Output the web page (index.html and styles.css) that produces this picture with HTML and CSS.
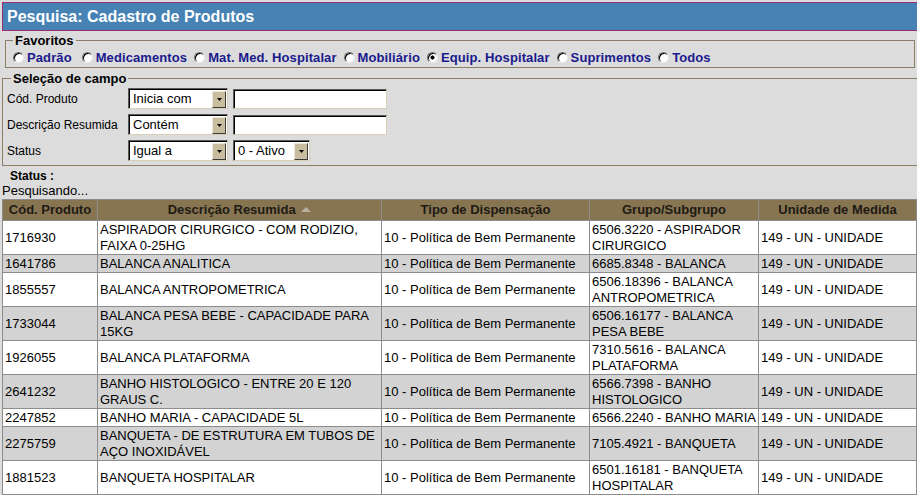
FILE: index.html
```html
<!DOCTYPE html>
<html lang="pt-BR">
<head>
<meta charset="utf-8">
<title>Pesquisa: Cadastro de Produtos</title>
<link rel="stylesheet" href="styles.css">
</head>
<body>
<div class="titlebar">Pesquisa: Cadastro de Produtos</div>

<fieldset class="box fav">
  <legend>Favoritos</legend>
  <div class="radios">
    <label class="opt first"><span class="radio"></span>Padrão</label>
    <label class="opt"><span class="radio"></span>Medicamentos</label>
    <label class="opt"><span class="radio"></span>Mat. Med. Hospitalar</label>
    <label class="opt"><span class="radio"></span>Mobiliário</label>
    <label class="opt"><span class="radio checked"></span>Equip. Hospitalar</label>
    <label class="opt"><span class="radio"></span>Suprimentos</label>
    <label class="opt"><span class="radio"></span>Todos</label>
  </div>
</fieldset>

<fieldset class="box sel">
  <legend>Seleção de campo</legend>
  <div class="fields">
    <span class="lbl">Cód. Produto</span>
    <div class="select w100"><span class="val">Inicia com</span><span class="btn"><svg width="5" height="3" viewBox="0 0 5 3"><path d="M0 0H5L2.5 3Z" fill="#000"/></svg></span></div>
    <div class="input"></div>

    <span class="lbl">Descrição Resumida</span>
    <div class="select w100"><span class="val">Contém</span><span class="btn"><svg width="5" height="3" viewBox="0 0 5 3"><path d="M0 0H5L2.5 3Z" fill="#000"/></svg></span></div>
    <div class="input"></div>

    <span class="lbl">Status</span>
    <div class="select w100"><span class="val">Igual a</span><span class="btn"><svg width="5" height="3" viewBox="0 0 5 3"><path d="M0 0H5L2.5 3Z" fill="#000"/></svg></span></div>
    <div class="select w77 second"><span class="val">0 - Ativo</span><span class="btn"><svg width="5" height="3" viewBox="0 0 5 3"><path d="M0 0H5L2.5 3Z" fill="#000"/></svg></span></div>
  </div>
</fieldset>

<div class="status">Status :</div>
<div class="msg">Pesquisando...</div>

<table class="results">
  <colgroup>
    <col class="c1"><col class="c2"><col class="c3"><col class="c4"><col class="c5">
  </colgroup>
  <thead>
    <tr>
      <th>Cód. Produto</th>
      <th>Descrição Resumida <span class="sort"></span></th>
      <th>Tipo de Dispensação</th>
      <th>Grupo/Subgrupo</th>
      <th>Unidade de Medida</th>
    </tr>
  </thead>
  <tbody>
    <tr class="w">
      <td>1716930</td><td>ASPIRADOR CIRURGICO - COM RODIZIO, FAIXA 0-25HG</td><td>10 - Política de Bem Permanente</td><td>6506.3220 - ASPIRADOR CIRURGICO</td><td>149 - UN - UNIDADE</td>
    </tr>
    <tr class="g">
      <td>1641786</td><td>BALANCA ANALITICA</td><td>10 - Política de Bem Permanente</td><td>6685.8348 - BALANCA</td><td>149 - UN - UNIDADE</td>
    </tr>
    <tr class="w">
      <td>1855557</td><td>BALANCA ANTROPOMETRICA</td><td>10 - Política de Bem Permanente</td><td>6506.18396 - BALANCA ANTROPOMETRICA</td><td>149 - UN - UNIDADE</td>
    </tr>
    <tr class="g">
      <td>1733044</td><td>BALANCA PESA BEBE - CAPACIDADE PARA 15KG</td><td>10 - Política de Bem Permanente</td><td>6506.16177 - BALANCA PESA BEBE</td><td>149 - UN - UNIDADE</td>
    </tr>
    <tr class="w">
      <td>1926055</td><td>BALANCA PLATAFORMA</td><td>10 - Política de Bem Permanente</td><td>7310.5616 - BALANCA PLATAFORMA</td><td>149 - UN - UNIDADE</td>
    </tr>
    <tr class="g">
      <td>2641232</td><td>BANHO HISTOLOGICO - ENTRE 20 E 120 GRAUS C.</td><td>10 - Política de Bem Permanente</td><td>6566.7398 - BANHO HISTOLOGICO</td><td>149 - UN - UNIDADE</td>
    </tr>
    <tr class="w">
      <td>2247852</td><td>BANHO MARIA - CAPACIDADE 5L</td><td>10 - Política de Bem Permanente</td><td class="nw">6566.2240 - BANHO MARIA</td><td>149 - UN - UNIDADE</td>
    </tr>
    <tr class="g">
      <td>2275759</td><td>BANQUETA - DE ESTRUTURA EM TUBOS DE AÇO INOXIDÁVEL</td><td>10 - Política de Bem Permanente</td><td>7105.4921 - BANQUETA</td><td>149 - UN - UNIDADE</td>
    </tr>
    <tr class="w">
      <td>1881523</td><td>BANQUETA HOSPITALAR</td><td>10 - Política de Bem Permanente</td><td>6501.16181 - BANQUETA HOSPITALAR</td><td>149 - UN - UNIDADE</td>
    </tr>
  </tbody>
</table>
</body>
</html>
```

FILE: styles.css
```css
* { box-sizing: border-box; }
html, body { margin: 0; padding: 0; }
body {
  background: #dcdcdc;
  font-family: "Liberation Sans", Arial, sans-serif;
  color: #000;
  width: 917px;
  height: 495px;
  overflow: hidden;
}

.titlebar {
  margin: 2px 0 0 2px;
  height: 29px;
  border: 1px solid #9b2d74;
  border-right: 0;
  background: #4682b4;
  color: #fff;
  font-weight: bold;
  font-size: 16px;
  line-height: 27px;
  padding-left: 4px;
}

.box {
  border: 1px solid #8c7f66;
  min-width: 0;
}
.box legend {
  font-size: 13px;
  font-weight: bold;
  line-height: 15px;
  padding: 0 2px;
}

.fav {
  margin: 2px 2px 0 5px;
  padding: 1px 0 1px 7px;
}
.radios {
  display: flex;
  align-items: center;
  gap: 7px;
  height: 17px;
}
.opt {
  display: flex;
  align-items: center;
  font-size: 13px;
  font-weight: bold;
  color: #1a1a8c;
  line-height: 16px;
  letter-spacing: 0.1px;
  white-space: nowrap;
}
.opt.first { margin-right: 3px; }
.radio {
  width: 11px;
  height: 11px;
  margin-right: 3px;
  border-radius: 50%;
  background: #fff;
  border: 1px solid;
  border-color: #6f6f6f #e8e8e8 #e8e8e8 #6f6f6f;
  box-shadow: inset 1px 1px 0 #000;
  flex: none;
}
.radio.checked {
  background: radial-gradient(circle at 50% 50%, #000 0 1.8px, #fff 2.3px);
}

.sel {
  margin: 3px 0 0 2px;
  padding: 2px 0 4px 4px;
  border-right: 0;
}
.sel legend { margin-left: 4px; }
.fields {
  display: grid;
  grid-template-columns: 121px 100px max-content;
  row-gap: 5px;
  align-items: center;
}
.lbl {
  font-size: 12px;
  line-height: 14px;
}
.select {
  height: 21px;
  display: flex;
  align-items: center;
  background: #fff;
  border: 1px solid;
  border-color: #5a5a5a #d8cfb6 #d8cfb6 #5a5a5a;
  box-shadow: inset 1px 1px 0 #000;
  font-size: 13px;
  padding: 1px 1px 1px 4px;
}
.select .val { flex: 1; line-height: 15px; white-space: nowrap; }
.select .btn {
  width: 14px;
  height: 17px;
  margin-top: 1px;
  background: #c8bd9f;
  border: 1px solid;
  border-color: #ece6d6 #3c3c3c #3c3c3c #ece6d6;
  display: flex;
  align-items: center;
  justify-content: center;
}
.w100 { width: 100px; }
.w77 { width: 77px; }
.second { margin-left: 5px; }
.input {
  margin-left: 5px;
  width: 154px;
  height: 20px;
  background: #fff;
  border: 1px solid;
  border-color: #5a5a5a #d8cfb6 #d8cfb6 #5a5a5a;
  box-shadow: inset 1px 1px 0 #000;
}

.status {
  margin-top: 3px;
  padding-left: 10px;
  font-size: 12px;
  font-weight: bold;
  line-height: 14px;
}
.msg {
  padding-left: 2px;
  font-size: 13px;
  line-height: 15px;
  height: 16px;
}

.results {
  margin-left: 2px;
  width: 914px;
  table-layout: fixed;
  border-collapse: separate;
  border-spacing: 0;
  border-top: 1px solid #8c8c8c;
  border-left: 1px solid #8c8c8c;
  font-size: 13px;
}
.c1 { width: 95px; }
.c2 { width: 284px; }
.c3 { width: 208px; }
.c4 { width: 169px; }
.c5 { width: 158px; }
.results th, .results td {
  border-right: 1px solid #8c8c8c;
  border-bottom: 1px solid #8c8c8c;
  vertical-align: middle;
  line-height: 16px;
}
.results th {
  background: #877552;
  color: #1e1a14;
  font-weight: bold;
  padding: 2px 2px 2px;
  text-align: center;
}
.results td {
  padding: 1px 0 0 2px;
  text-align: left;
}
.results td.nw { white-space: nowrap; }
.results tr.w td { background: #fff; }
.results tr.g td { background: #d3d3d3; }
.sort {
  display: inline-block;
  width: 0;
  height: 0;
  border-left: 5px solid transparent;
  border-right: 5px solid transparent;
  border-bottom: 5px solid #b8b0a0;
  vertical-align: 2px;
  margin-left: 2px;
}
```
